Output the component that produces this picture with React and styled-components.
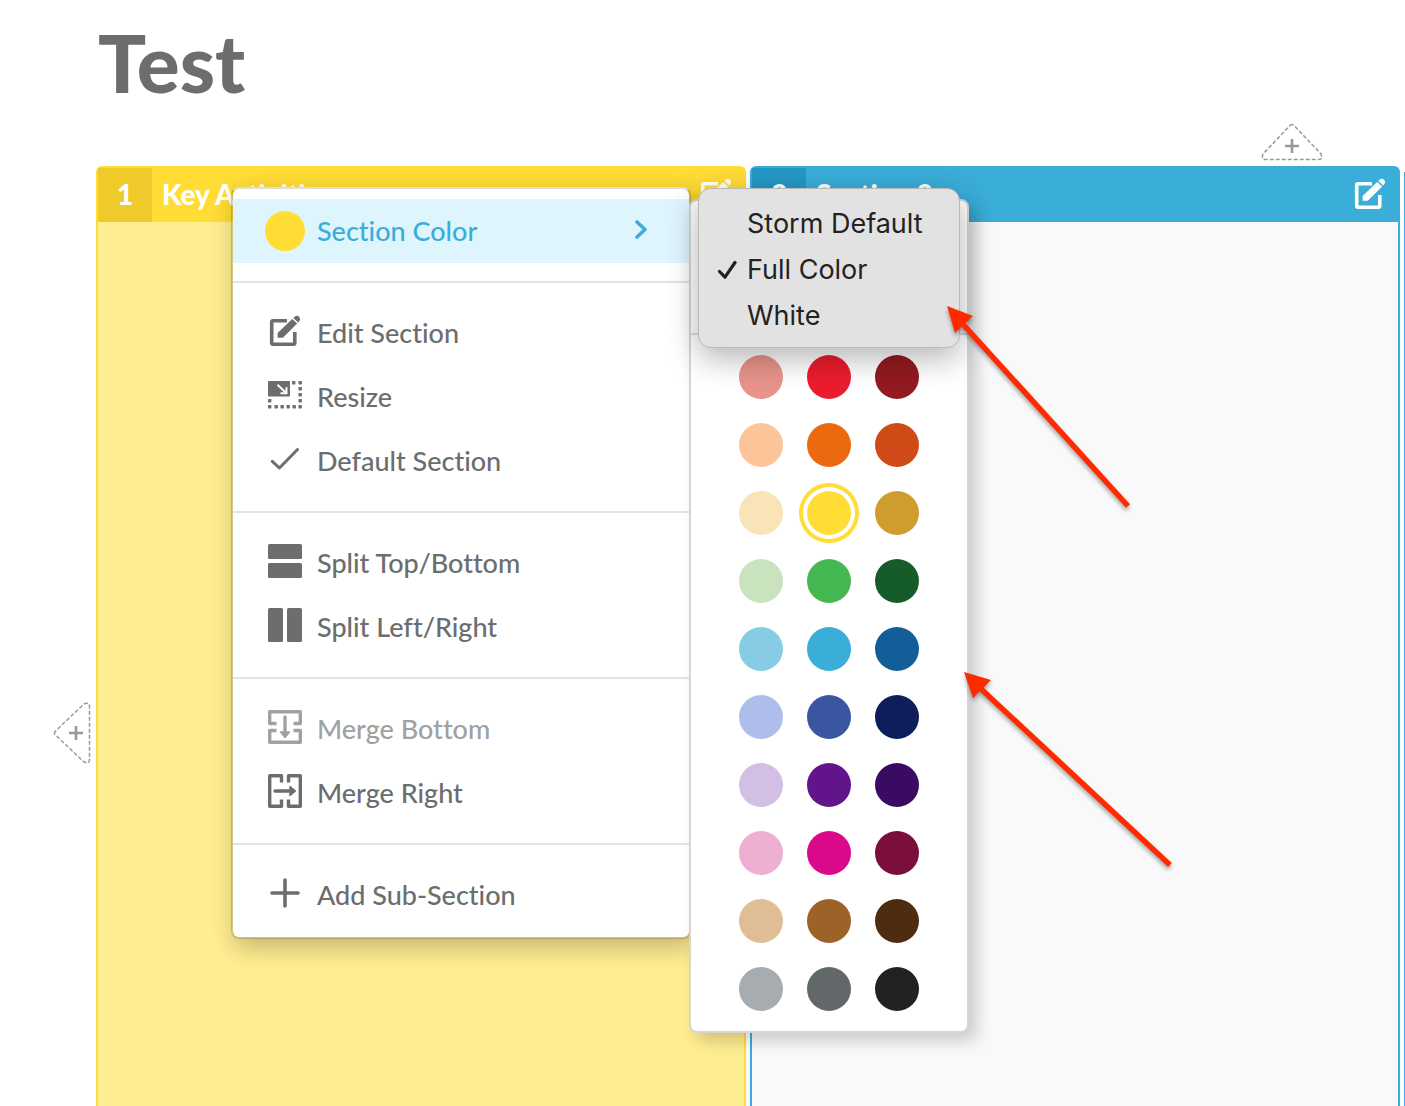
import React from "react";
import styled, { createGlobalStyle, css } from "styled-components";

const GlobalStyle = createGlobalStyle`
  * { box-sizing: border-box; }
  body { margin: 0; background: #fff; }
  button { border: 0; margin: 0; padding: 0; background: none; font: inherit; color: inherit; cursor: pointer; }
  svg { display: block; }
`;

const Page = styled.main`
  position: relative;
  display: flex;
  flex-direction: column;
  height: 100vh;
  overflow: hidden;
  font-family: Lato, "Open Sans", sans-serif;
  font-variant-ligatures: none;
  color: #6b6d6f;
`;

const Title = styled.h1`
  margin: 0;
  padding: 14px 98px 0;
  font-size: 80px;
  line-height: 96px;
  font-weight: 900;
`;

const AddRow = styled.div`
  display: flex;
  justify-content: flex-end;
  padding: 13px 82px 5px;
`;

const Workspace = styled.div`
  flex: 1;
  display: flex;
`;

const Gutter = styled.div`
  flex: 0 0 96px;
  display: flex;
  flex-direction: column;
  align-items: flex-end;
  padding-right: 5px;
  &::before { content: ""; flex: 61; }
  &::after { content: ""; flex: 39; }
`;

const Board = styled.div`
  flex: 1;
  display: grid;
  grid-template-columns: 1fr 1fr 1px;
  column-gap: 4px;
`;

const Section = styled.section`
  border: 2px solid ${(p) => p.$color};
  border-bottom: 0;
  border-radius: 6px 6px 0 0;
  background: ${(p) => p.$body};
`;

const SectionPeek = styled.div`
  margin-top: 6px;
  background: #3aadd9;
`;

const SectionHeader = styled.header`
  display: flex;
  align-items: center;
  height: 54px;
  padding-right: 11px;
  background: ${(p) => p.$color};
  color: #fff;
`;

const SectionNumber = styled.span`
  align-self: stretch;
  display: flex;
  align-items: center;
  justify-content: center;
  width: 54px;
  padding-bottom: 2px;
  background: ${(p) => p.$color};
  font-size: 28px;
  font-weight: 900;
`;

const SectionTitle = styled.h2`
  flex: 1;
  margin: 0;
  padding: 0 0 2px 10px;
  font-size: 28px;
  font-weight: 900;
`;

const EditButton = styled.button`
  padding-bottom: 2px;
`;

const Menu = styled.div`
  position: absolute;
  top: 187px;
  left: 231px;
  width: 460px;
  padding: 10px 0;
  border: 2px solid rgba(0, 0, 0, 0.16);
  border-top-color: #dedede;
  border-radius: 8px;
  background: #fff;
  background-clip: padding-box;
  box-shadow: 4px 8px 24px rgba(0, 0, 0, 0.24);
`;

const Divider = styled.hr`
  height: 2px;
  margin: 18px 0;
  border: 0;
  background: #e2e2e2;
`;

const MenuItem = styled.button`
  display: flex;
  align-items: center;
  gap: 12px;
  width: 100%;
  height: 64px;
  padding: 0 41px 0 32px;
  font-size: 27px;
  font-weight: 500;
  text-align: left;
  ${(p) => p.$active && css`background: #dff5fe; color: #3aadd9;`}
  &:disabled { color: #a0a1a2; }
`;

const IconSlot = styled.span`
  display: flex;
  justify-content: center;
  width: 40px;
  padding-bottom: 4px;
`;

const ColorDot = styled.span`
  width: 40px;
  height: 40px;
  border-radius: 50%;
  background: #ffdd35;
`;

const ItemLabel = styled.span`
  flex: 1;
  padding-bottom: 2px;
`;

const Submenu = styled.div`
  position: absolute;
  top: 10px;
  left: 456px;
  width: 280px;
  border: 2px solid #d6d6d6;
  border-radius: 8px;
  background: #fff;
  box-shadow: 8px 8px 16px rgba(0, 0, 0, 0.18);
`;

const StyleArea = styled.div`
  position: relative;
  height: 134px;
  border-bottom: 2px solid #dcdcdc;
`;

const Popup = styled.div`
  position: absolute;
  top: -13px;
  left: 7px;
  width: 262px;
  padding: 11px 0 9px;
  border: 1px solid #b9b9b9;
  border-radius: 13px;
  background: #e2e2e2;
  box-shadow: 0 10px 32px rgba(0, 0, 0, 0.3);
`;

const PopupOption = styled.button`
  display: grid;
  grid-template-columns: 20px 1fr;
  align-items: center;
  column-gap: 10px;
  width: 100%;
  height: 46px;
  padding-left: 18px;
  font-family: Inter, Roboto, sans-serif;
  font-size: 27px;
  color: #222;
  text-align: left;
`;

const Swatches = styled.div`
  display: grid;
  grid-template-columns: repeat(3, 44px);
  justify-content: center;
  gap: 24px;
  padding: 20px 0;
`;

const Swatch = styled.button`
  height: 44px;
  border-radius: 50%;
  background: ${(p) => p.$color};
  ${(p) => p.$selected && css`box-shadow: 0 0 0 4px #fff, 0 0 0 8px ${p.$color};`}
`;

const Annotations = styled.svg`
  position: absolute;
  top: 0;
  left: 0;
  pointer-events: none;
  filter: drop-shadow(0 3px 2px rgba(0, 0, 0, 0.35));
`;

const Icon = ({ children }) => (
  <svg width="34" height="34" viewBox="0 0 34 34" fill="none" stroke="currentColor" strokeWidth="3" aria-hidden="true">
    {children}
  </svg>
);

const EditIcon = () => (
  <Icon>
    <path d="M19 6.7H5.2Q3.7 6.7 3.7 8.2V28.8Q3.7 30.3 5.2 30.3H25.3Q26.8 30.3 26.8 28.8V18" strokeWidth="3.6" />
    <path d="M9.6 23.8V19L24.2 4.9L29.2 9.6L14.8 23.8Z" fill="currentColor" stroke="none" />
    <path d="M25.3 3.9L27 2.4Q29.2 1 31.1 2.8Q32.9 4.8 31.4 6.9L30.1 8.4Z" fill="currentColor" stroke="none" />
  </Icon>
);

const resizeDots = [
  [24, 3], [30.5, 3], [30.5, 9], [30.5, 15], [30.5, 21], [0, 21],
  [0, 27], [6.5, 27], [12.5, 27], [18.5, 27], [24.5, 27], [30.5, 27],
];

const ResizeIcon = () => (
  <Icon>
    <rect y="3" width="22" height="15.5" rx="1" fill="currentColor" stroke="none" />
    <path d="M9.5 6.8L17.5 14.3M18.5 9.3V15.2H12.5" stroke="#fff" strokeWidth="2" />
    {resizeDots.map(([x, y]) => (
      <rect key={`${x}-${y}`} x={x} y={y} width="3.4" height="3.4" rx="0.6" fill="currentColor" stroke="none" />
    ))}
  </Icon>
);

const CheckIcon = () => (
  <Icon><path d="M4.3 19.3L11.4 26L29.5 7.5" strokeLinecap="round" strokeLinejoin="round" /></Icon>
);

const SplitRowsIcon = () => (
  <Icon>
    <rect width="34" height="15" rx="1.5" fill="currentColor" stroke="none" />
    <rect y="19" width="34" height="15" rx="1.5" fill="currentColor" stroke="none" />
  </Icon>
);

const SplitColumnsIcon = () => (
  <Icon>
    <rect width="15" height="34" rx="1.5" fill="currentColor" stroke="none" />
    <rect x="19" width="15" height="34" rx="1.5" fill="currentColor" stroke="none" />
  </Icon>
);

const MergeIcon = ({ right }) => (
  <Icon>
    <g transform={right ? "matrix(0 1 1 0 0 0)" : undefined} strokeLinejoin="round">
      <path d="M8.5 13.5H1.7V1.7H32.3V13.5H25.5M8.5 20.5H1.7V32.3H32.3V20.5H25.5" strokeWidth="3.4" />
      <path d="M17 7V22" strokeLinecap="round" strokeWidth="3.4" />
      <path d="M12.5 22H21.5L17 27.5Z" fill="currentColor" strokeWidth="1.4" />
    </g>
  </Icon>
);

const PlusIcon = () => (
  <Icon><path d="M17 4V30M4 17H30" strokeWidth="3.6" strokeLinecap="round" /></Icon>
);

const AddTopIcon = () => (
  <svg width="62" height="38" viewBox="0 0 62 38" fill="none" stroke="#98999b" aria-hidden="true">
    <path d="M29 2.5Q31 .5 33 2.5L60 31Q62 36.5 58 36.5H4Q0 36.5 2 31Z" strokeWidth="1.5" strokeDasharray="4 2" />
    <path d="M31 16V30M24 23H38" strokeWidth="2.6" />
  </svg>
);

const AddLeftIcon = () => (
  <svg width="38" height="62" viewBox="0 0 38 62" fill="none" stroke="#98999b" aria-hidden="true">
    <path d="M2.5 29Q.5 31 2.5 33L31 60Q36.5 62 36.5 58V4Q36.5 0 31 2Z" strokeWidth="1.5" strokeDasharray="4 2" />
    <path d="M23 24V38M16 31H30" strokeWidth="2.6" />
  </svg>
);

const palette = [
  ["Light red", "#e8948b"], ["Red", "#eb1c2d"], ["Dark red", "#921a20"],
  ["Light orange", "#fdc499"], ["Orange", "#eb690f"], ["Dark orange", "#d04a18"],
  ["Light yellow", "#f8e4b7"], ["Yellow", "#ffdd35"], ["Dark yellow", "#cf9d2f"],
  ["Light green", "#c8e3be"], ["Green", "#45b751"], ["Dark green", "#165c2a"],
  ["Light blue", "#86cce4"], ["Blue", "#3aadd9"], ["Dark blue", "#135e98"],
  ["Light indigo", "#afbdea"], ["Indigo", "#3a56a1"], ["Dark indigo", "#0e1d5b"],
  ["Light purple", "#d2bfe3"], ["Purple", "#62148a"], ["Dark purple", "#390b62"],
  ["Light pink", "#eeb0d2"], ["Pink", "#da098b"], ["Dark pink", "#7a0f3c"],
  ["Light brown", "#e0be95"], ["Brown", "#9c6228"], ["Dark brown", "#4d2c0f"],
  ["Light gray", "#a7acb0"], ["Gray", "#626769"], ["Black", "#222222"],
];

const groups = [
  [["Edit Section", <EditIcon />], ["Resize", <ResizeIcon />], ["Default Section", <CheckIcon />]],
  [["Split Top/Bottom", <SplitRowsIcon />], ["Split Left/Right", <SplitColumnsIcon />]],
  [["Merge Bottom", <MergeIcon />, true], ["Merge Right", <MergeIcon right />]],
  [["Add Sub-Section", <PlusIcon />]],
];

const BoardSection = ({ number, title, color, dark, body }) => (
  <Section $color={color} $body={body}>
    <SectionHeader $color={color}>
      <SectionNumber $color={dark}>{number}</SectionNumber>
      <SectionTitle>{title}</SectionTitle>
      <EditButton type="button" aria-label={`Edit ${title}`}><EditIcon /></EditButton>
    </SectionHeader>
  </Section>
);

const ColorSubmenu = () => (
  <Submenu>
    <StyleArea>
      <Popup role="menu">
        {["Storm Default", "Full Color", "White"].map((name) => (
          <PopupOption key={name} type="button" role="menuitemradio" aria-checked={name === "Full Color"}>
            <span>
              {name === "Full Color" && (
                <svg width="20" height="20" viewBox="0 0 20 20" fill="none" stroke="#222" strokeWidth="3.2" strokeLinecap="round" strokeLinejoin="round" aria-hidden="true">
                  <path d="M2.5 12.5L8 18.2L18 3.5" />
                </svg>
              )}
            </span>
            {name}
          </PopupOption>
        ))}
      </Popup>
    </StyleArea>
    <Swatches>
      {palette.map(([name, color]) => (
        <Swatch key={name} type="button" aria-label={name} $color={color} $selected={name === "Yellow"} />
      ))}
    </Swatches>
  </Submenu>
);

export default function App() {
  return (
    <Page>
      <GlobalStyle />
      <Title>Test</Title>
      <AddRow>
        <button type="button" aria-label="Add section above"><AddTopIcon /></button>
      </AddRow>
      <Workspace>
        <Gutter>
          <button type="button" aria-label="Add section left"><AddLeftIcon /></button>
        </Gutter>
        <Board>
          <BoardSection number="1" title="Key Activities" color="#ffdd35" dark="#efca2b" body="#ffed91" />
          <BoardSection number="2" title="Section 2" color="#3aadd9" dark="#2398c4" body="#f9f9f9" />
          <SectionPeek />
        </Board>
      </Workspace>
      <Menu>
        <MenuItem type="button" $active>
          <ColorDot />
          <ItemLabel>Section Color</ItemLabel>
          <svg width="14" height="22" viewBox="0 0 14 22" fill="none" stroke="currentColor" strokeWidth="3.6" strokeLinecap="round" strokeLinejoin="round" aria-hidden="true">
            <path d="M3 2L11 9.5L3 17" />
          </svg>
        </MenuItem>
        {groups.map((items) => (
          <React.Fragment key={items[0][0]}>
            <Divider />
            {items.map(([label, icon, disabled]) => (
              <MenuItem key={label} type="button" disabled={disabled}>
                <IconSlot>{icon}</IconSlot>
                <ItemLabel>{label}</ItemLabel>
              </MenuItem>
            ))}
          </React.Fragment>
        ))}
        <ColorSubmenu />
      </Menu>
      <Annotations width="1200" height="900" viewBox="0 0 1200 900" fill="#ff2a00" stroke="#ff2a00" strokeWidth="5.5" aria-hidden="true">
        <path d="M960 321L1128 506M980 688L1170 865" />
        <path d="M947 306L973 316L955 333ZM964 672L991 680L973 698Z" stroke="none" />
      </Annotations>
    </Page>
  );
}
